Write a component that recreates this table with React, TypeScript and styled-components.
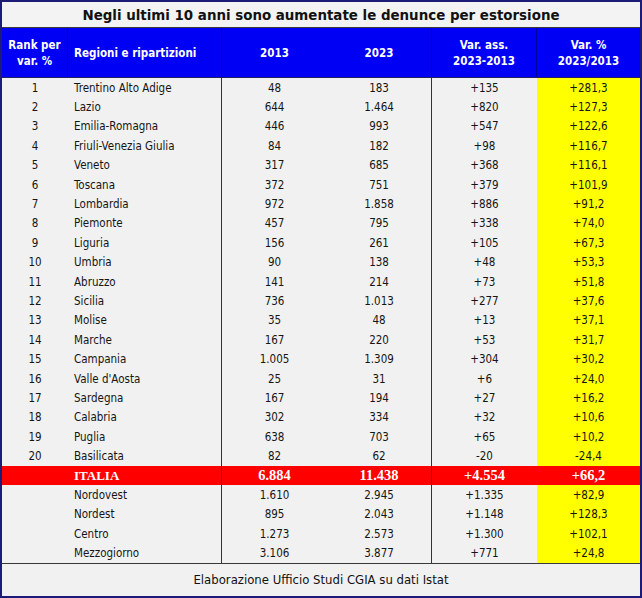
import React from "react";
import styled, { createGlobalStyle } from "styled-components";

const GlobalStyle = createGlobalStyle`
  html, body {
    margin: 0;
    padding: 0;
    background: #ffffff;
  }
`;

type Row = [string, string, string, string, string, string];

const regions: Row[] = [
  ["1", "Trentino Alto Adige", "48", "183", "+135", "+281,3"],
  ["2", "Lazio", "644", "1.464", "+820", "+127,3"],
  ["3", "Emilia-Romagna", "446", "993", "+547", "+122,6"],
  ["4", "Friuli-Venezia Giulia", "84", "182", "+98", "+116,7"],
  ["5", "Veneto", "317", "685", "+368", "+116,1"],
  ["6", "Toscana", "372", "751", "+379", "+101,9"],
  ["7", "Lombardia", "972", "1.858", "+886", "+91,2"],
  ["8", "Piemonte", "457", "795", "+338", "+74,0"],
  ["9", "Liguria", "156", "261", "+105", "+67,3"],
  ["10", "Umbria", "90", "138", "+48", "+53,3"],
  ["11", "Abruzzo", "141", "214", "+73", "+51,8"],
  ["12", "Sicilia", "736", "1.013", "+277", "+37,6"],
  ["13", "Molise", "35", "48", "+13", "+37,1"],
  ["14", "Marche", "167", "220", "+53", "+31,7"],
  ["15", "Campania", "1.005", "1.309", "+304", "+30,2"],
  ["16", "Valle d'Aosta", "25", "31", "+6", "+24,0"],
  ["17", "Sardegna", "167", "194", "+27", "+16,2"],
  ["18", "Calabria", "302", "334", "+32", "+10,6"],
  ["19", "Puglia", "638", "703", "+65", "+10,2"],
  ["20", "Basilicata", "82", "62", "-20", "-24,4"],
];

const total: Row = ["", "ITALIA", "6.884", "11.438", "+4.554", "+66,2"];

const areas: Row[] = [
  ["", "Nordovest", "1.610", "2.945", "+1.335", "+82,9"],
  ["", "Nordest", "895", "2.043", "+1.148", "+128,3"],
  ["", "Centro", "1.273", "2.573", "+1.300", "+102,1"],
  ["", "Mezzogiorno", "3.106", "3.877", "+771", "+24,8"],
];

const COLS = "66px 154px 105px 105px 105px 1fr";

const Frame = styled.div`
  width: 642px;
  height: 598px;
  box-sizing: border-box;
  border: 2px solid #1c1c78;
  background: #f1f1f1;
  display: flex;
  flex-direction: column;
  font-family: "DejaVu Sans Condensed", "DejaVu Sans", sans-serif;
  color: #151515;
`;

const Title = styled.div`
  height: 25px;
  border-bottom: 1px solid #3a3a3a;
  display: flex;
  align-items: center;
  justify-content: center;
  font-size: 14.9px;
  font-weight: bold;
  color: #111;
  background: #f3f3f3;
`;

const Header = styled.div`
  display: grid;
  grid-template-columns: ${COLS};
  height: 49px;
  background: #0000f5;
  border-bottom: 1px solid #202060;
`;

const HeadCell = styled.div<{ $left?: boolean; $line?: boolean }>`
  display: flex;
  align-items: center;
  justify-content: ${(p) => (p.$left ? "flex-start" : "center")};
  padding-left: ${(p) => (p.$left ? "6px" : "0")};
  text-align: center;
  color: #ffffff;
  font-weight: bold;
  font-size: 11.5px;
  line-height: 16px;
  border-right: ${(p) => (p.$line ? "1px solid #0000a0" : "none")};
`;

const Body = styled.div`
  display: flex;
  flex-direction: column;
`;

const DataRow = styled.div<{ $total?: boolean }>`
  display: grid;
  grid-template-columns: ${COLS};
  height: 19.4px;
  background: ${(p) => (p.$total ? "#ff0000" : "transparent")};
  color: ${(p) => (p.$total ? "#ffffff" : "inherit")};
  font-family: ${(p) =>
    p.$total ? '"Liberation Serif", serif' : "inherit"};
  font-weight: ${(p) => (p.$total ? "bold" : "normal")};
  font-size: ${(p) => (p.$total ? "14.5px" : "11.5px")};
`;

const Cell = styled.div<{
  $left?: boolean;
  $line?: boolean;
  $yellow?: boolean;
  $small?: boolean;
}>`
  display: flex;
  align-items: center;
  justify-content: ${(p) => (p.$left ? "flex-start" : "center")};
  padding-left: ${(p) => (p.$left ? "6px" : "0")};
  background: ${(p) => (p.$yellow ? "#ffff00" : "transparent")};
  border-right: ${(p) => (p.$line ? "1px solid #333" : "none")};
  font-size: ${(p) => (p.$small ? "13px" : "inherit")};
  white-space: nowrap;
`;

const Footer = styled.div`
  flex: 1;
  border-top: 1px solid #3a3a3a;
  display: flex;
  align-items: center;
  justify-content: center;
  font-size: 13px;
  color: #111;
`;

const TableRow = ({ row, total }: { row: Row; total?: boolean }) => (
  <DataRow $total={total}>
    <Cell>{row[0]}</Cell>
    <Cell $left $line $small={total}>
      {row[1]}
    </Cell>
    <Cell>{row[2]}</Cell>
    <Cell $line>{row[3]}</Cell>
    <Cell>{row[4]}</Cell>
    <Cell $yellow={!total}>{row[5]}</Cell>
  </DataRow>
);

export default function App() {
  return (
    <>
      <GlobalStyle />
      <Frame>
        <Title>Negli ultimi 10 anni sono aumentate le denunce per estorsione</Title>
        <Header>
          <HeadCell $line>
            Rank per
            <br />
            var. %
          </HeadCell>
          <HeadCell $left $line>
            Regioni e ripartizioni
          </HeadCell>
          <HeadCell>2013</HeadCell>
          <HeadCell $line>2023</HeadCell>
          <HeadCell $line>
            Var. ass.
            <br />
            2023-2013
          </HeadCell>
          <HeadCell>
            Var. %
            <br />
            2023/2013
          </HeadCell>
        </Header>
        <Body>
          {regions.map((r) => (
            <TableRow key={r[1]} row={r} />
          ))}
          <TableRow row={total} total />
          {areas.map((r) => (
            <TableRow key={r[1]} row={r} />
          ))}
        </Body>
        <Footer>Elaborazione Ufficio Studi CGIA su dati Istat</Footer>
      </Frame>
    </>
  );
}
